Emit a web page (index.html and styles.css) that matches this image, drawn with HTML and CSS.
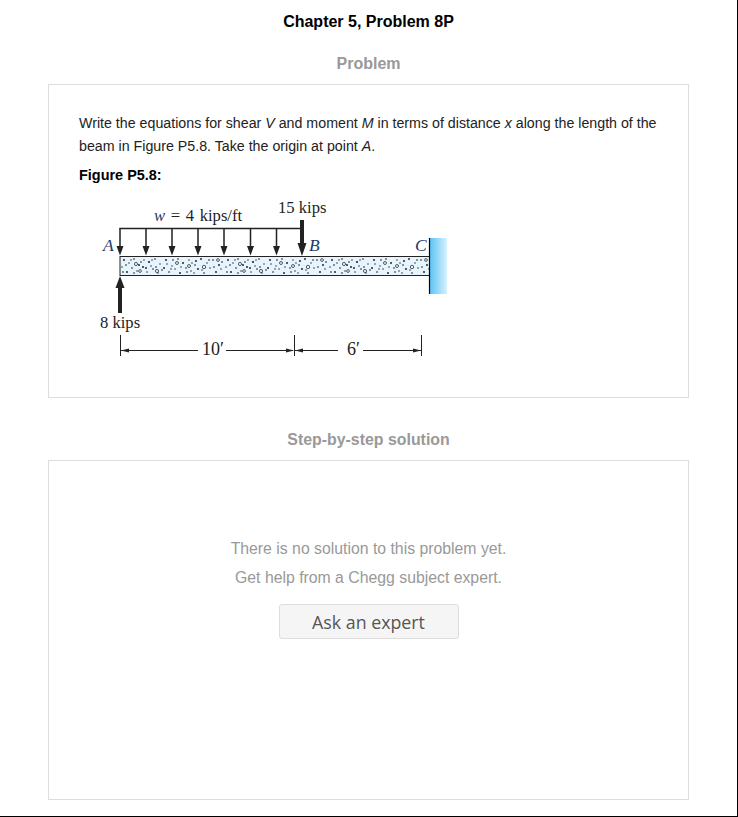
FILE: index.html
```html
<!DOCTYPE html>
<html lang="en">
<head>
<meta charset="utf-8">
<title>Chapter 5, Problem 8P</title>
<link rel="stylesheet" href="styles.css">
</head>
<body>
<main class="page">
  <h1 class="title">Chapter 5, Problem 8P</h1>
  <h2 class="section-title first">Problem</h2>
  <section class="card problem">
    <p class="question">Write the equations for shear <i>V</i> and moment <i>M</i> in terms of distance <i>x</i> along the length of the beam in Figure P5.8. Take the origin at point <i>A</i>.</p>
    <p class="figure-label">Figure P5.8:</p>
    <svg class="figure" width="380" height="170" viewBox="80 195 380 170" xmlns="http://www.w3.org/2000/svg">
      <defs>
        <linearGradient id="wall" x1="0" x2="1" y1="0" y2="0">
          <stop offset="0" stop-color="#5cc4f4"/>
          <stop offset="1" stop-color="#d9f1fe"/>
        </linearGradient>
        <pattern id="speckle" x="120" y="257" width="104" height="18" patternUnits="userSpaceOnUse">
          <g class="dots">
            <circle cx="4" cy="3" r=".9"/><circle cx="9" cy="6" r=".7"/><circle cx="14" cy="2" r=".8"/><circle cx="19" cy="8" r=".9"/><circle cx="24" cy="3" r=".7"/>
            <circle cx="29" cy="5" r="1"/><circle cx="35" cy="2" r=".8"/><circle cx="40" cy="7" r=".7"/><circle cx="46" cy="3" r=".9"/><circle cx="52" cy="9" r=".7"/>
            <circle cx="58" cy="2" r=".8"/><circle cx="63" cy="6" r=".9"/><circle cx="69" cy="3" r=".7"/><circle cx="75" cy="8" r=".8"/><circle cx="81" cy="2" r=".9"/>
            <circle cx="87" cy="6" r=".7"/><circle cx="93" cy="3" r=".8"/><circle cx="99" cy="8" r=".9"/><circle cx="2" cy="10" r=".7"/><circle cx="7" cy="15" r=".9"/>
            <circle cx="12" cy="11" r=".8"/><circle cx="17" cy="14" r=".7"/><circle cx="23" cy="10" r=".9"/><circle cx="27" cy="15" r=".7"/><circle cx="33" cy="12" r=".8"/>
            <circle cx="38" cy="16" r=".7"/><circle cx="44" cy="11" r=".9"/><circle cx="49" cy="15" r=".8"/><circle cx="55" cy="12" r=".7"/><circle cx="60" cy="16" r=".9"/>
            <circle cx="66" cy="11" r=".8"/><circle cx="71" cy="14" r=".7"/><circle cx="78" cy="12" r=".9"/><circle cx="84" cy="16" r=".8"/><circle cx="90" cy="11" r=".7"/>
            <circle cx="96" cy="15" r=".9"/><circle cx="101" cy="12" r=".7"/><circle cx="31" cy="9" r=".7"/><circle cx="72" cy="6" r=".7"/>
            <circle cx="6" cy="8" r=".8"/><circle cx="11" cy="3" r=".7"/><circle cx="21" cy="5" r=".8"/><circle cx="26" cy="11" r=".9"/><circle cx="32" cy="3" r=".7"/>
            <circle cx="42" cy="13" r=".8"/><circle cx="47" cy="7" r=".7"/><circle cx="53" cy="3" r=".8"/><circle cx="61" cy="10" r=".7"/><circle cx="67" cy="15" r=".8"/>
            <circle cx="76" cy="4" r=".9"/><circle cx="82" cy="13" r=".7"/><circle cx="89" cy="3" r=".8"/><circle cx="94" cy="10" r=".8"/><circle cx="3" cy="15" r=".8"/>
            <circle cx="14" cy="16" r=".8"/><circle cx="51" cy="12" r=".7"/><circle cx="74" cy="16" r=".7"/><circle cx="102" cy="5" r=".8"/><circle cx="36" cy="10" r=".8"/>
          </g>
          <g class="rings">
            <circle cx="16" cy="7" r="1.6"/><circle cx="37" cy="14" r="1.6"/><circle cx="57" cy="6" r="1.5"/><circle cx="84" cy="10" r="1.7"/><circle cx="98" cy="3" r="1.4"/><circle cx="20" cy="14" r="1.4"/><circle cx="69" cy="9" r="1.5"/>
          </g>
        </pattern>
      </defs>

      <rect class="beam" x="120" y="256.500" width="310" height="19"/>
      <rect class="speckle" x="120" y="257" width="309" height="18"/>
      <rect class="wall" x="430" y="238" width="17" height="56"/>
      <path class="line-wall" d="M429.500 238V294"/>

      <path class="line" d="M119.500 228.500H302"/>
      <path class="line" d="M120 228V247M146 228V247M172 228V247M198 228V247M224 228V247M250.500 228V247M276.500 228V247"/>
      <path class="head" d="M116.500 246H123.500L120 255.500ZM142.500 246H149.500L146 255.500ZM168.500 246H175.500L172 255.500ZM194.500 246H201.500L198 255.500ZM220.500 246H227.500L224 255.500ZM247 246H254L250.500 255.500ZM273 246H280L276.500 255.500Z"/>

      <path class="head" d="M300 220H304V243H306.500L302 256L297.500 243H300Z"/>
      <path class="head" d="M118 313V288H115.500L120 276L124.500 288H122V313Z"/>

      <text class="label wide" x="154" y="221"><tspan class="math">w</tspan> = 4 kips/ft</text>
      <text class="label" x="278" y="213">15 kips</text>
      <text class="label" x="100" y="328">8 kips</text>
      <text class="label math big" x="103" y="251">A</text>
      <text class="label math big" x="309" y="251">B</text>
      <text class="label math big" x="415" y="251">C</text>

      <path class="line-thin" d="M120.500 335V356M294.500 335V356M421.500 335V356"/>
      <path class="line-thin" d="M121 350.500H198M226 350.500H293M295 350.500H338M363 350.500H421"/>
      <path class="head" d="M121 350.500L129 348.500V352.500ZM294 350.500L286 348.500V352.500ZM295 350.500L303 348.500V352.500ZM421 350.500L413 348.500V352.500Z"/>
      <text class="label dim" x="202" y="355">10′</text>
      <text class="label dim" x="347" y="355">6′</text>
    </svg>
  </section>
  <h2 class="section-title second">Step-by-step solution</h2>
  <section class="card solution">
    <p class="empty">There is no solution to this problem yet.</p>
    <p class="empty">Get help from a Chegg subject expert.</p>
    <button class="ask" type="button">Ask an expert</button>
  </section>
</main>
</body>
</html>
```
FILE: styles.css
```css
* { box-sizing: border-box; }
html, body { margin: 0; padding: 0; background: #fff; }
.page {
  width: 738px;
  height: 817px;
  overflow: hidden;
  padding: 0 48px;
  border-right: 1px solid #000;
  border-bottom: 1px solid #000;
  font-family: "Liberation Sans", Arial, sans-serif;
}
.title {
  margin: 0;
  padding-top: 13px;
  font-size: 16px;
  line-height: 18px;
  font-weight: 700;
  color: #000;
  text-align: center;
}
.section-title {
  margin: 0;
  font-size: 16px;
  line-height: 18px;
  font-weight: 700;
  color: #999;
  text-align: center;
}
.section-title.first { padding-top: 24px; }
.section-title.second { padding-top: 33px; font-size: 15.900px; }
.card {
  width: 641px;
  border: 1px solid #ddd;
  background: #fff;
}
.problem {
  height: 314px;
  margin-top: 11px;
  padding: 27px 30px 0;
}
.question {
  margin: 0;
  font-size: 14.230px;
  line-height: 23px;
  color: #222;
}
.figure-label {
  margin: 7px 0 0;
  font-size: 14.450px;
  line-height: 20px;
  font-weight: 700;
  color: #000;
}
.figure {
  display: block;
  margin: 10px 0 0 1px;
}
.solution {
  height: 340px;
  margin-top: 11px;
  padding-top: 73px;
  display: flex;
  flex-direction: column;
  align-items: center;
}
.empty {
  margin: 0;
  font-size: 15.800px;
  line-height: 29px;
  color: #999;
}
.ask {
  width: 180px;
  height: 35px;
  margin-top: 12px;
  padding: 0;
  background: #f5f5f5;
  border: 1px solid #ddd;
  border-radius: 3px;
  font-family: "Open Sans", sans-serif;
  font-size: 17.800px;
  color: #555;
}
.label {
  font-family: "Liberation Serif", "Times New Roman", serif;
  font-size: 16.600px;
  fill: #222;
}
.label.wide { word-spacing: 1.500px; }
.label.dim { font-size: 18px; }
.math { font-style: italic; fill: #1f3a68; }
.label.big { font-size: 17.500px; }
.line { fill: none; stroke: #222; stroke-width: 1.500; }
.line-thin { fill: none; stroke: #222; stroke-width: 1; }
.line-wall { fill: none; stroke: #000; stroke-width: 1.200; }
.head { fill: #222; }
.beam { fill: #e6f5fd; stroke: #222; stroke-width: 1; }
.speckle { fill: url(#speckle); }
.wall { fill: url(#wall); }
.dots circle { fill: #111; }
.rings circle { fill: none; stroke: #333; stroke-width: .8; }
```
